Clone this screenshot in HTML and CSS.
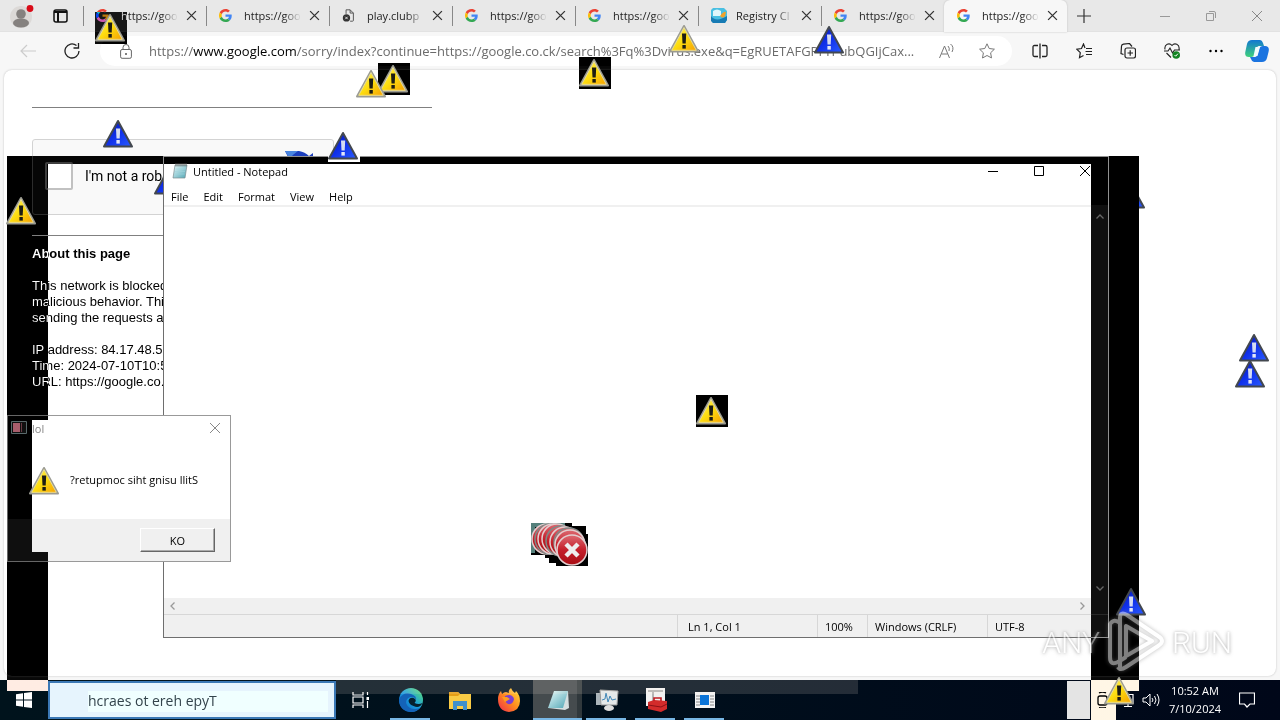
FILE: index.html
```html
<!DOCTYPE html>
<html lang="en">
<head>
<meta charset="utf-8">
<title>Desktop</title>
<link rel="stylesheet" href="styles.css">
</head>
<body>
<svg class="defs" aria-hidden="true">
  <defs>
    <linearGradient id="gy" x1="0" y1="0" x2="1" y2="1"><stop offset="0" stop-color="#fff27a"/><stop offset=".5" stop-color="#fdde10"/><stop offset="1" stop-color="#f59a00"/></linearGradient>
    <linearGradient id="gb" x1="0" y1="0" x2="1" y2="1"><stop offset="0" stop-color="#0713a0"/><stop offset=".5" stop-color="#1030ea"/><stop offset="1" stop-color="#2a5cff"/></linearGradient>
    <linearGradient id="gn" x1="0" y1="0" x2="1" y2="1"><stop offset="0" stop-color="#e8fafa"/><stop offset="1" stop-color="#4fa5b4"/></linearGradient>
    <linearGradient id="ge" x1="0" y1="1" x2="1" y2="0"><stop offset="0" stop-color="#0b57b8"/><stop offset=".5" stop-color="#1a9de0"/><stop offset="1" stop-color="#5fe36a"/></linearGradient>
    <linearGradient id="gf" x1="1" y1="0" x2="0" y2="1"><stop offset="0" stop-color="#ffe23c"/><stop offset=".5" stop-color="#ff8a1e"/><stop offset="1" stop-color="#f0264f"/></linearGradient>
    <linearGradient id="gc" x1="0" y1="0" x2="0" y2="1"><stop offset="0" stop-color="#1377d1"/><stop offset="1" stop-color="#3ed17c"/></linearGradient>
    <linearGradient id="gr" x1="0" y1="0" x2="0" y2="1"><stop offset="0" stop-color="#dd6a72"/><stop offset=".5" stop-color="#c41f2a"/><stop offset="1" stop-color="#a80d14"/></linearGradient>
  </defs>
  <symbol id="warn" viewBox="0 0 32 32">
    <path d="M15 3 29 28.500H1Z" fill="url(#gy)" stroke="#9b9b92" stroke-width="2" stroke-linejoin="round"/>
    <path d="M15 4.500 27.300 27.300H2.700Z" fill="none" stroke="#f4e9a0" stroke-width=".8"/>
    <path d="M13 10.500h4.200l-.5 10h-3.200Z" fill="#1d1c14"/><rect x="13.400" y="22" width="3.400" height="3.600" fill="#1d1c14"/>
  </symbol>
  <symbol id="info" viewBox="0 0 32 32">
    <path d="M15 3 29 28.500H1Z" fill="url(#gb)" stroke="#43484f" stroke-width="2" stroke-linejoin="round"/>
    <path d="M13 10.500h4.200l-.5 10h-3.200Z" fill="#d5dcf2"/><rect x="13.400" y="22" width="3.400" height="3.600" fill="#e4e8f8"/>
  </symbol>
  <symbol id="google" viewBox="0 0 48 48">
    <path fill="#EA4335" d="M24 9.500c3.540 0 6.710 1.220 9.210 3.600l6.850-6.850C35.900 2.380 30.470 0 24 0 14.620 0 6.510 5.380 2.560 13.220l7.980 6.190C12.430 13.720 17.740 9.500 24 9.500z"/>
    <path fill="#4285F4" d="M46.980 24.550c0-1.570-.15-3.090-.38-4.550H24v9.020h12.940c-.58 2.960-2.260 5.480-4.780 7.180l7.730 6c4.510-4.180 7.090-10.360 7.090-17.650z"/>
    <path fill="#FBBC05" d="M10.530 28.590c-.48-1.450-.76-2.990-.76-4.590s.27-3.140.76-4.590l-7.980-6.190C.92 16.460 0 20.120 0 24c0 3.880.92 7.540 2.560 10.780l7.970-6.190z"/>
    <path fill="#34A853" d="M24 48c6.480 0 11.930-2.130 15.890-5.810l-7.730-6c-2.150 1.450-4.920 2.300-8.160 2.300-6.260 0-11.570-4.220-13.470-9.910l-7.980 6.190C6.510 42.620 14.620 48 24 48z"/>
  </symbol>
  <symbol id="x" viewBox="0 0 10 10"><path d="M1 1l8 8M9 1l-8 8" stroke="currentColor" stroke-width="1.200" fill="none"/></symbol>
  <symbol id="note" viewBox="0 0 16 16"><path d="M3 2h12l-2 13H1Z" fill="url(#gn)" stroke="#7d8c90" stroke-width=".7"/><path d="M4 .5v3M6 .5v3M8 .5v3M10 .5v3M12 .5v3M14 .5v3" stroke="#555" stroke-width=".8"/><path d="M3.500 6h10M3 8.500h10M2.500 11h10" stroke="#9fd4de" stroke-width=".6"/></symbol>
</svg>

<main class="browser">
  <header class="tabs">
    <button class="profile" aria-label="Profile"><svg viewBox="0 0 24 24"><circle cx="11" cy="13" r="11" fill="#dcd9d7"/><circle cx="11" cy="10" r="4.800" fill="#85817f"/><ellipse cx="11" cy="19" rx="8" ry="4.500" fill="#85817f"/><circle cx="20" cy="4.500" r="3.400" fill="#d90b18"/></svg></button>
    <button class="tabmenu" aria-label="Tab actions"><svg viewBox="0 0 15 14"><rect x="1" y="1" width="13" height="12" rx="2" fill="none" stroke="#111" stroke-width="1.500"/><path d="M1 3h13M5 3v10" stroke="#111" stroke-width="2"/></svg></button>
    <div class="tab"><svg class="fav"><use href="#google"/></svg><span>https://goo</span><button aria-label="Close tab"><svg><use href="#x"/></svg></button></div>
    <div class="tab"><svg class="fav"><use href="#google"/></svg><span>https://goo</span><button aria-label="Close tab"><svg><use href="#x"/></svg></button></div>
    <div class="tab"><svg class="fav" viewBox="0 0 14 16"><path d="M4 6V1h5l4 4v9a1 1 0 0 1-1 1H9M9 1v4h4" fill="none" stroke="#555" stroke-width="1.200"/><circle cx="4.500" cy="11" r="4.500" fill="#333"/><path d="M3 9.500l3 3M6 9.500l-3 3" stroke="#fff"/></svg><span>play.clubp</span><button aria-label="Close tab"><svg><use href="#x"/></svg></button></div>
    <div class="tab"><svg class="fav"><use href="#google"/></svg><span>https://goo</span><button aria-label="Close tab"><svg><use href="#x"/></svg></button></div>
    <div class="tab"><svg class="fav"><use href="#google"/></svg><span>https://goo</span><button aria-label="Close tab"><svg><use href="#x"/></svg></button></div>
    <div class="tab"><svg class="fav wide" viewBox="0 0 16 16"><path d="M2 0h11l3 3v9l-2 3H2L0 12V2Z" fill="#49bfe2"/><path d="M2 3q4-3 8 0v5H2Z" fill="#dff6fb"/><path d="M0 8c3 4 8 5 16 0v4l-2 3H2L0 13Z" fill="#177bb4"/><path d="M9 8q4-5 6-4l-1 4q-2 3-5 0Z" fill="#f1a129"/></svg><span>Registry Cl</span><button aria-label="Close tab"><svg><use href="#x"/></svg></button></div>
    <div class="tab"><svg class="fav"><use href="#google"/></svg><span>https://goo</span><button aria-label="Close tab"><svg><use href="#x"/></svg></button></div>
    <div class="tab active"><svg class="fav"><use href="#google"/></svg><span>https://goo</span><button aria-label="Close tab"><svg><use href="#x"/></svg></button></div>
    <button class="newtab" aria-label="New tab"><svg viewBox="0 0 14 14"><path d="M7 0v14M0 7h14" stroke="#333" stroke-width="1.200"/></svg></button>
    <div class="winbtns">
      <button aria-label="Minimize"><svg viewBox="0 0 10 10"><path d="M0 5.500h10" stroke="#999"/></svg></button>
      <button aria-label="Restore"><svg viewBox="0 0 10 10"><path d="M.5 2.500h7v7h-7ZM3 .5h5q1.500 0 1.500 1.500v5" fill="none" stroke="#999"/></svg></button>
      <button aria-label="Close"><svg viewBox="0 0 10 10"><path d="M0 0l10 10M10 0L0 10" stroke="#888"/></svg></button>
    </div>
  </header>
  <nav class="toolbar">
    <button class="nav" aria-label="Back"><svg viewBox="0 0 16 16"><path d="M16 8H1M7 2L1 8l6 6" fill="none" stroke="#ccc" stroke-width="1.200"/></svg></button>
    <button class="nav" aria-label="Reload"><svg viewBox="0 0 16 16"><path d="M15 8A7 7 0 1 1 12.500 2.600M14.500 0v5h-5" fill="none" stroke="#222" stroke-width="1.300"/></svg></button>
    <div class="address">
      <svg class="lock" viewBox="0 0 12 15"><rect x=".6" y="5.500" width="10.800" height="8.800" rx="1.500" fill="none" stroke="#666"/><path d="M3 5.500V3.500a3 3 0 0 1 6 0v2" fill="none" stroke="#666"/><circle cx="6" cy="10" r="1" fill="#555"/></svg>
      <p class="url">https://<b>www.google.com</b>/sorry/index?continue=https://google.co.ck/search%3Fq%3Dvirus.exe&amp;q=EgRUETAFGPPrPubQGIjCax...</p>
      <button aria-label="Read aloud"><svg viewBox="0 0 16 16"><path d="M.5 15L5.500 3l5 12M2.500 11h6M9 3q2 2 1 5M11.500 1q4 3 1.500 8" fill="none" stroke="#777"/></svg></button>
      <button aria-label="Add to favorites"><svg viewBox="0 0 16 16"><path d="M8 .8l2.200 4.700 5.200.7-3.800 3.600.9 5.100L8 12.500 3.500 15l.9-5.200L.6 6.200l5.200-.7Z" fill="none" stroke="#777"/></svg></button>
    </div>
    <div class="tools">
      <button aria-label="Split screen"><svg viewBox="0 0 16 16"><path d="M6 2.500H2.500q-1.500 0-1.500 1.500v8q0 1.500 1.500 1.500H6M10 2.500h3.500q1.500 0 1.500 1.500v8q0 1.500-1.500 1.500H10M8 .5v15" fill="none" stroke="#222" stroke-width="1.300"/></svg></button>
      <button aria-label="Favorites"><svg viewBox="0 0 16 16"><path d="M9 5L7.500 1 5.500 5.500.8 6.200l3.500 3.500-.8 5 4-2.200M10 5.500h6M9.500 8.500H16M10 11.500h6" fill="none" stroke="#222" stroke-width="1.200"/></svg></button>
      <button aria-label="Collections"><svg viewBox="0 0 16 16"><rect x="5" y="5" width="10.500" height="10" rx="2" fill="none" stroke="#222" stroke-width="1.200"/><path d="M10.200 7.200v5.600M7.500 10h5.500M3.500 11.500L1 10.500 1.500 3q.2-1.500 2-1.800l6-.7 2.500 3" fill="none" stroke="#222" stroke-width="1.200"/></svg></button>
      <button aria-label="Browser essentials"><svg viewBox="0 0 16 16"><path d="M1 6.500C0 1 5.500-.5 8 2.500c2.500-3 8-1.500 7 4M2.500 10L7 14.500M0 8h4l2-3 2.500 5L10.500 7H16" fill="none" stroke="#222" stroke-width="1.100"/><circle cx="12.200" cy="12" r="3.800" fill="#138423"/><path d="M10.500 12l1.200 1.200 2.200-2.500" fill="none" stroke="#fff"/></svg></button>
      <button aria-label="Settings and more"><svg viewBox="0 0 16 16"><circle cx="2.500" cy="8" r="1.200"/><circle cx="8" cy="8" r="1.200"/><circle cx="13.500" cy="8" r="1.200"/></svg></button>
      <button class="copilot" aria-label="Copilot"><svg viewBox="0 0 24 22"><path d="M7 0h8q2 0 3 3l1 3h-5q-2 0-3 4l-1 4q-1 3-4 3H4q-5 0-3.500-6L2 4Q3 0 7 0Z" fill="url(#gc)"/><path d="M17 22H9q-2 0-3-3l-1-2h5q2 0 3-4l1-4q1-3 4-3h2q5 0 3.500 6L22 18q-1 4-5 4Z" fill="#1b74e0"/><path d="M10.500 7H15l-2.500 9H8.500Z" fill="#f2fbfd"/></svg></button>
    </div>
  </nav>
  <article class="page">
    <hr>
    <div class="captcha">
      <input type="checkbox" id="robot"><label for="robot">I'm not a robot</label>
      <svg viewBox="0 0 32 32"><path d="M2 0h14q6 1 10 5l4-3v14H16l4-4q-6-8-14-4Z" fill="#1c3fbd"/><path d="M2 0h13q-5 3-8 8Z" fill="#4a86e0"/></svg>
    </div>
    <hr>
    <h1>About this page</h1>
    <p>This network is blocked due to unaddressed<br>malicious behavior. This page checks to see<br>sending the requests and not a robot.</p>
    <p>IP address: 84.17.48.5<br>Time: 2024-07-10T10:52<br>URL: https://google.co.ck</p>
  </article>
</main>

<footer class="taskbar">
  <button class="start" aria-label="Start"><svg viewBox="0 0 16 16"><path d="M0 2.200L7 1.200V7.500H0ZM8 1L16 0v7.500H8ZM0 8.500h7v6.300L0 13.800ZM8 8.500h8V16l-8-1Z" fill="#fff"/></svg></button>
  <input class="search" type="text" aria-label="Search" value="hcraes ot ereh epyT">
  <div class="apps">
    <button class="app" aria-label="Task view"><svg viewBox="0 0 22 22"><path d="M3 3v3h10V3M3 19v-3h10v3M3 8h10v6H3ZM17.500 3v3M17.500 12v7" fill="none" stroke="#fff" stroke-width="1.200"/><rect x="16.500" y="8" width="2.500" height="3" fill="#fff"/></svg></button>
    <button class="app open" aria-label="Edge"><svg viewBox="0 0 24 24"><circle cx="12" cy="12" r="12" fill="url(#ge)"/><path d="M0 11q5-8 12-5 6 2 5 6-1-3-5-3-5 1-5 6 2 6 9 6 4 0 6-2-4 5-10 5Q0 23 0 11Z" fill="#1463b8"/><path d="M9.500 13q1-4 5-3 4 2 1 5 4 2 8 0-3 6-9 3-4-1-5-5Z" fill="#06202f"/></svg></button>
    <button class="app" aria-label="File Explorer"><svg viewBox="0 0 24 24"><path d="M1 4h9l2 2h11v15H1Z" fill="#f9cb45"/><path d="M1 4h9l2 2-2 2H1Z" fill="#e59e16"/><path d="M5 13h14v9h-4v-4H9v4H5Z" fill="#3f8fca"/></svg></button>
    <button class="app" aria-label="Firefox"><svg viewBox="0 0 24 24"><path d="M1 11q0-5 3-8l1 3q2-2 4-2l3 1q-1-3 2-5 1 3 4 5l1-2q4 4 4 10 0 10-11 11Q1 23 1 11Z" fill="url(#gf)"/><path d="M8 8q7-3 9 3-1 6-6 5-4-2-3-8Z" fill="#7b3fd0"/><path d="M5 9l5 0 3 2-5 3Z" fill="#ff9c20"/></svg></button>
    <button class="app open current" aria-label="Notepad"><svg viewBox="0 0 24 24"><path d="M22 3l1 17-4 2L2 20Z" fill="#d5dfe0"/><path d="M8 3h14l-5 17H2Z" fill="url(#gn)"/></svg></button>
    <button class="app open" aria-label="Resource Monitor"><svg viewBox="0 0 24 24"><path d="M1 5h7v12H1Z" fill="#aab4ba"/><path d="M5 2l18 1-1 14-16 0Z" fill="#e4e8e9" stroke="#999"/><path d="M7 12l3-1 1-6 2 9 2-6 2 4 4-1" fill="none" stroke="#4187b6"/><ellipse cx="14" cy="20" rx="5" ry="3" fill="#ddd"/></svg></button>
    <button class="app open" aria-label="Toolbox"><svg viewBox="0 0 24 24"><path d="M2 0h19v18H2Z" fill="#f1f1f1"/><path d="M4 3h15M9 4v10" stroke="#777"/><path d="M4 14l6-2 13 1v8l-6 3-13-3Z" fill="#d32b2b"/><path d="M10 13v-3h7v3" fill="none" stroke="#c01c22" stroke-width="1.600"/><path d="M4 17l13 2 6-3" fill="none" stroke="#8c1116"/></svg></button>
    <button class="app open" aria-label="Application"><svg viewBox="0 0 24 24"><path d="M2 4h20v16H2Z" fill="#f3f3f3"/><path d="M3 8h4M3 11h4M3 14h4M3 17h4M17 8h4M17 11h4M17 14h4M17 17h4" stroke="#888"/><path d="M7 7h9v10H7Z" fill="#0b74d8"/></svg></button>
  </div>
  <div class="tray">
    <span class="block"></span>
    <svg class="t1" viewBox="0 0 16 16"><rect x="4" y="4" width="9" height="9" rx="2" fill="none" stroke="#fff" stroke-width="1.300"/><path d="M5 1q3.500-2 7 0M5 15.500q3.500 1 7 0" fill="none" stroke="#fff" stroke-width="1.300"/></svg>
    <svg class="t2" viewBox="0 0 16 16"><path d="M5 2.500h10v8H5M10 10.500v4M6 14.500h8M1 4.500h4v6H1Z" fill="none" stroke="#fff" stroke-width="1.200"/></svg>
    <svg class="t3" viewBox="0 0 18 16"><path d="M1 6h3l4-4v12l-4-4H1ZM10 6q2 2 0 4M12.500 4q3 4 0 8M15 2q4 6 0 12" fill="none" stroke="#fff"/></svg>
    <time>10:52 AM<br>7/10/2024</time>
    <svg class="t4" viewBox="0 0 16 16"><path d="M.5 1h15v11H11l-3 3-2.500-3H.5Z" fill="none" stroke="#fff" stroke-width="1.200"/></svg>
  </div>
</footer>
<div class="glass"></div>

<svg class="sprite b1"><use href="#info"/></svg>
<svg class="sprite b2"><use href="#info"/></svg>

<section class="window notepad" aria-label="Untitled - Notepad">
  <div class="titlebar"><svg class="appicon"><use href="#note"/></svg><span>Untitled - Notepad</span>
    <button aria-label="Minimize"><svg viewBox="0 0 10 10"><path d="M0 5.500h10" stroke="#000"/></svg></button>
    <button aria-label="Maximize"><svg viewBox="0 0 10 10"><path d="M.5.5h9v9h-9Z" stroke="#000" fill="none"/></svg></button>
    <button aria-label="Close"><svg viewBox="0 0 10 10"><path d="M0 0l10 10M10 0L0 10" stroke="#000"/></svg></button>
  </div>
  <div class="menubar"><button>File</button><button>Edit</button><button>Format</button><button>View</button><button>Help</button></div>
  <div class="editor">
    <textarea aria-label="Text"></textarea>
    <div class="vscroll"><svg viewBox="0 0 8 5"><path d="M.5 4.500L4 1l3.500 3.500" fill="none" stroke="#999" stroke-width="1.300"/></svg><svg viewBox="0 0 8 5"><path d="M.5.500L4 4 7.500.5" fill="none" stroke="#999" stroke-width="1.300"/></svg></div>
    <div class="hscroll"><svg viewBox="0 0 5 8"><path d="M4.500.5L1 4l3.500 3.500" fill="none" stroke="#999" stroke-width="1.300"/></svg><svg viewBox="0 0 5 8"><path d="M.5.5L4 4 .5 7.500" fill="none" stroke="#999" stroke-width="1.300"/></svg></div>
  </div>
  <div class="status"><span class="pos">Ln 1, Col 1</span><span class="zoom">100%</span><span class="eol">Windows (CRLF)</span><span class="enc">UTF-8</span></div>
</section>

<section class="window dialog" role="dialog" aria-label="lol">
  <div class="titlebar"><span>lol</span><button aria-label="Close"><svg viewBox="0 0 10 10"><path d="M0 0l10 10M10 0L0 10" stroke="#888"/></svg></button></div>
  <p>?retupmoc siht gnisu llitS</p>
  <div class="actions"><button>KO</button></div>
</section>

<div class="invert i1"></div><div class="invert i2"></div><div class="invert i3"></div><div class="invert i4"></div>
<div class="invert i5"></div><div class="invert i6"></div>
<div class="invert box w1"></div><div class="invert box w2"></div><div class="invert box w3"></div><div class="invert box w4"></div>
<div class="blackout"></div>
<svg class="dlgicon" viewBox="0 0 16 13"><path d="M.5.500h15v12H.5Z" fill="#101010" stroke="#59696b"/><path d="M2 2h7v9H2Z" fill="#a95e6c"/><path d="M10.500 2v9" stroke="#693944"/></svg>

<svg class="sprite w1"><use href="#warn"/></svg>
<svg class="sprite w2"><use href="#warn"/></svg>
<svg class="sprite w3"><use href="#warn"/></svg>
<svg class="sprite w4"><use href="#warn"/></svg>
<svg class="sprite w5"><use href="#warn"/></svg>
<svg class="sprite w6"><use href="#warn"/></svg>
<svg class="sprite w7"><use href="#warn"/></svg>
<svg class="sprite w8"><use href="#warn"/></svg>
<svg class="sprite w9"><use href="#warn"/></svg>
<svg class="sprite n1"><use href="#info"/></svg>
<svg class="sprite n2"><use href="#info"/></svg>
<svg class="sprite n3"><use href="#info"/></svg>
<svg class="sprite n4"><use href="#info"/></svg>
<svg class="sprite n5"><use href="#info"/></svg>
<svg class="sprite n6"><use href="#info"/></svg>
<svg class="errors" viewBox="0 0 57 43" aria-hidden="true">
  <path d="M0 0H41V3H55V11H57V43H25V40H18V35H14V32H0Z" fill="#000"/>
  <path d="M0 0h34v4H4v26H0Z" fill="#55807c"/>
  <g fill="url(#gr)" stroke="#e3cfd0" stroke-width="1.500"><circle cx="16" cy="16" r="15"/><circle cx="19" cy="16" r="15" stroke="#7f8986"/><circle cx="22" cy="16" r="15"/><circle cx="26" cy="16" r="15"/><circle cx="30" cy="18" r="15" stroke="#7f8986"/><circle cx="34" cy="19" r="15"/><circle cx="38" cy="20" r="15" stroke="#7f8986"/><circle cx="39" cy="22" r="15"/><circle cx="41" cy="27" r="15"/></g>
  <path d="M35 21l12 12M47 21L35 33" stroke="#eee" stroke-width="4.500"/>
</svg>

<div class="watermark"><span>ANY</span><svg viewBox="0 0 60 64"><path d="M14 13Q8 8 4 14V47Q4 56 12 52L20 47M14 58V8Q14 1 21 5L52 26Q60 31 52 36L20 57Q14 61 12 57M20 16V46L46 31Z" fill="none" stroke="#fff" stroke-width="4" stroke-linejoin="round"/></svg><span>RUN</span></div>
</body>
</html>
```
FILE: styles.css
```css
* { box-sizing: border-box; }
body {
  margin: 0;
  height: 100vh;
  display: flex;
  flex-direction: column;
  position: relative;
  overflow: hidden;
  background: #fff;
  font: 11px "Open Sans", "Noto Sans", sans-serif;
  color: #000;
}
button { border: 0; padding: 0; background: none; font: inherit; color: inherit; display: grid; place-items: center; }
svg { display: block; }
.defs { position: absolute; width: 0; height: 0; }

.browser { flex: 1; min-height: 0; display: flex; flex-direction: column; background: #f7f7f7; }
.tabs { display: flex; align-items: stretch; height: 32px; background: #e8e8e8; border-bottom: 1px solid #e2e2e2; }
.profile { width: 44px; }
.profile svg { width: 24px; height: 24px; }
.tabmenu { width: 39px; padding-right: 6px; }
.tabmenu svg { width: 15px; height: 14px; }
.tab { flex: 0 1 123px; min-width: 0; display: flex; align-items: center; }
.tab::before { content: ""; flex: none; width: 1px; height: 20px; background: #888; margin-right: 12px; }
.tab.active { background: #f7f7f7; border-radius: 6px 6px 0 0; margin-bottom: -1px; padding-bottom: 1px; box-shadow: 0 0 2px #bbb; }
.tab.active::before { background: none; }
.fav { width: 13px; height: 13px; flex: none; }
.fav.wide { width: 16px; height: 16px; margin-right: -3px; }
.tab span { width: 57px; margin-left: 12px; overflow: hidden; white-space: nowrap; font-size: 11px; color: #222; -webkit-mask-image: linear-gradient(90deg, #000 70%, transparent); mask-image: linear-gradient(90deg, #000 70%, transparent); }
.tab button { margin-left: 8px; width: 11px; color: #333; }
.tab button svg { width: 11px; height: 11px; }
.newtab { width: 34px; }
.newtab svg { width: 14px; height: 14px; }
.winbtns { margin-left: auto; display: flex; }
.winbtns button { width: 46px; }
.winbtns svg { width: 10px; height: 10px; }

.toolbar { height: 38px; display: flex; align-items: center; padding: 0 0 0 6px; }
.nav { width: 44px; height: 30px; }
.nav svg { width: 16px; height: 16px; }
.address { flex: 1; min-width: 0; height: 30px; margin-left: 6px; padding: 0 5px 0 20px; display: flex; align-items: center; background: #fff; border-radius: 15px; }
.lock { width: 12px; height: 15px; flex: none; }
.url { flex: 1; min-width: 0; margin: 0 0 0 17px; font-size: 13px; white-space: nowrap; overflow: hidden; color: #6b6b6b; }
.url b { font-weight: 400; color: #000; }
.address button { width: 40px; }
.address button svg { width: 16px; height: 16px; }
.tools { display: flex; padding-left: 6px; }
.tools button { width: 44px; }
.tools svg { width: 16px; height: 16px; }
.tools .copilot { width: 42px; padding-right: 4px; }
.tools .copilot svg { width: 24px; height: 22px; }

.page { flex: 1; min-height: 0; margin: 0 4px 4px; padding: 37px 28px 0; background: #fff; border-radius: 8px; box-shadow: 0 0 2px #bbb; overflow: hidden; font: 13px/16px "Liberation Sans", Arial, sans-serif; }
.page hr { border: 0; height: 1px; margin: 0; width: 400px; background: #808080; }
.captcha { width: 302px; height: 76px; margin: 31px 0 20px; padding: 0 18px 2px 12px; display: flex; align-items: center; gap: 12px; background: #f9f9f9; border: 1px solid #d3d3d3; border-radius: 3px; font: 14px Roboto, sans-serif; }
.captcha input { appearance: none; width: 28px; height: 28px; margin: 0; border: 2px solid #c1c1c1; border-radius: 2px; background: #fff; }
.captcha svg { width: 32px; height: 32px; margin: 11px 0 0 auto; align-self: flex-start; }
.page h1 { margin: 10px 0 16px; font-size: 13px; line-height: 16px; }
.page p { margin: 0 0 16px; white-space: nowrap; }

.taskbar { height: 40px; display: flex; background: linear-gradient(90deg, #00131c, #000f1c 50%, #000719); color: #fff; }
.start { width: 48px; }
.start svg { width: 16px; height: 16px; }
.search { width: 288px; margin: 1px 0; padding: 0 0 0 38px; border: 2px solid #3b78b5; outline: 0; background: linear-gradient(#f0ffff, #f0ffff) 38px 8px / 240px 21px no-repeat #e6f4fd; font: 14px "Open Sans", sans-serif; color: #33444c; }
.apps { display: flex; margin-left: -1px; }
.app { width: 49px; position: relative; }
.app svg { width: 24px; height: 24px; }
.app:first-child { width: 50px; }
.app:first-child svg { width: 22px; height: 22px; }
.app.open::after { content: ""; position: absolute; left: 4px; right: 5px; bottom: 0; height: 2px; background: #78b7e5; }
.app + .app { margin-left: 0; }
.apps { padding-left: 1px; }
.app.current { background: linear-gradient(90deg, #454b4e 44px, #30383c 44px); }
.app.current::after { left: 0; right: 0; }
.tray { margin-left: auto; display: flex; align-items: center; }
.tray .block { width: 23px; height: 38px; background: #e4e4e4; }
.tray svg { width: 16px; height: 16px; }
.tray .t1 { margin-left: 4px; }
.tray .t2 { margin-left: 8px; }
.tray .t3 { width: 18px; margin-left: 8px; }
.tray time { width: 70px; font-size: 11px; line-height: 18px; text-align: center; }
.tray .t4 { margin: 0 25px 0 9px; }
.glass { position: absolute; left: 336px; bottom: 26px; width: 522px; height: 14px; background: #ffeee4; opacity: .14; }

.window { position: absolute; background: #fff; display: flex; flex-direction: column; }
.titlebar { display: flex; align-items: center; }
.titlebar span { flex: 1; }
.titlebar button { width: 46px; height: 24px; }
.titlebar button svg { width: 10px; height: 10px; }
.notepad { left: 163px; top: 156px; width: 946px; height: 482px; border: 1px solid #6e6e6e; }
.notepad .titlebar { height: 28px; }
.appicon { width: 16px; height: 16px; margin: 0 5px 0 8px; }
.menubar { height: 22px; display: flex; gap: 15px; padding: 2px 0 0 7px; border-bottom: 2px solid #f0f0f0; }
.editor { flex: 1; min-height: 0; display: grid; grid-template: 1fr 16px / 1fr 17px; background: #f0f0f0; }
.editor textarea { border: 0; outline: 0; resize: none; background: #fff; }
.vscroll { display: flex; flex-direction: column; justify-content: space-between; align-items: center; padding: 7px 0; background: #f0f0f0; }
.vscroll svg { width: 8px; height: 5px; }
.hscroll { display: flex; justify-content: space-between; align-items: center; padding: 0 6px; }
.hscroll svg { width: 5px; height: 8px; }
.status { height: 23px; display: flex; justify-content: flex-end; align-items: stretch; background: #f0f0f0; border-top: 1px solid #d7d7d7; }
.status span { display: flex; align-items: center; padding-left: 7px; border-left: 1px solid #d7d7d7; }
.status .pos { width: 140px; padding-left: 10px; }
.status .zoom { width: 50px; }
.status .eol { width: 120px; }
.status .enc { width: 121px; }

.dialog { left: 7px; top: 415px; width: 224px; height: 147px; border: 1px solid #999; }
.dialog .titlebar { height: 24px; padding-left: 24px; color: #888; }
.dialog .titlebar button { width: 30px; }
.dialog p { flex: 1; margin: 0; padding: 0 0 0 62px; line-height: 79px; }
.actions { height: 42px; padding: 9px 15px; display: flex; justify-content: flex-end; align-items: flex-start; background: #f0f0f0; }
.actions button { width: 75px; height: 24px; border: 1px solid; border-color: #fff #666 #666 #fff; box-shadow: inset -1px -1px #aaa; }

.invert { position: absolute; background: #fff; mix-blend-mode: difference; }
.i1 { left: 7px; top: 156px; width: 1132px; height: 8px; }
.i2 { left: 7px; top: 164px; width: 41px; height: 256px; }
.i3 { left: 7px; top: 420px; width: 25px; height: 132px; }
.i4 { left: 7px; top: 552px; width: 41px; height: 139px; }
.i5 { left: 1091px; top: 164px; width: 48px; height: 527px; }
.i6 { left: 1091px; top: 691px; width: 25px; height: 29px; }
.blackout { position: absolute; left: 1109px; top: 156px; width: 30px; height: 520px; background: #000; }
.dlgicon { position: absolute; left: 11px; top: 421px; width: 16px; height: 13px; }

.sprite, .box { position: absolute; width: 32px; height: 32px; }
.b1 { left: 154px; top: 165px; }
.b2 { left: 1115px; top: 179px; }
.w1 { left: 95px; top: 12px; }
.w2 { left: 378px; top: 63px; }
.w3 { left: 579px; top: 57px; }
.w4 { left: 696px; top: 395px; }
.w5 { left: 356px; top: 68px; }
.w6 { left: 669px; top: 23px; }
.w7 { left: 6px; top: 195px; }
.w8 { left: 29px; top: 465px; }
.w9 { left: 1104px; top: 675px; }
.n1 { left: 103px; top: 118px; }
.n2 { left: 328px; top: 130px; background: linear-gradient(transparent 26px, #fff 26px); }
.n3 { left: 814px; top: 24px; }
.n4 { left: 1239px; top: 332px; }
.n5 { left: 1235px; top: 358px; }
.n6 { left: 1116px; top: 586px; }
.errors { position: absolute; left: 531px; top: 523px; width: 57px; height: 43px; }

.watermark { position: absolute; right: 48px; bottom: 46px; display: flex; align-items: center; gap: 6px; opacity: .5; color: #fff; font: 300 30px Roboto, sans-serif; text-shadow: 0 0 3px #777, 0 1px 4px #999; }
.watermark svg { width: 60px; height: 64px; filter: drop-shadow(0 0 2px #777); }
```
